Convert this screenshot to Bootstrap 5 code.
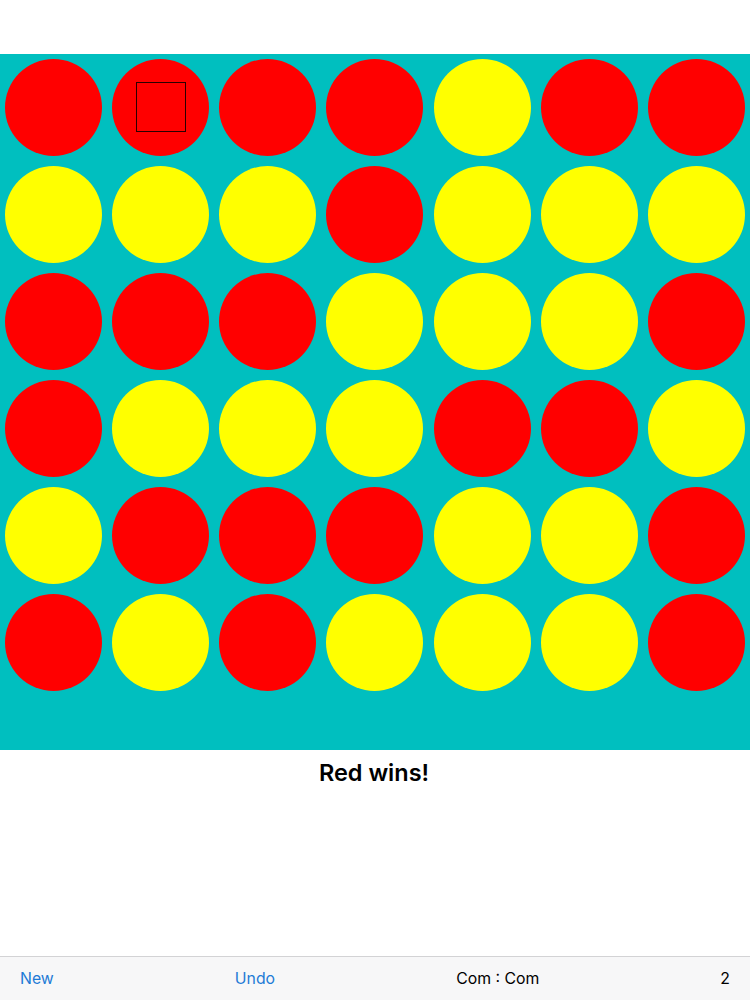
<!DOCTYPE html>
<html lang="en">
<head>
<meta charset="utf-8">
<title>Four in a row</title>
<link href="https://cdn.jsdelivr.net/npm/bootstrap@5.3.0/dist/css/bootstrap.min.css" rel="stylesheet">
<style>
html, body { height: 100%; }
body { font-family: "Inter", "Liberation Sans", sans-serif; background: #fff; color: #000; }
.app-shell { height: 1000px; padding-top: 54px; }
.game-board { height: 696px; padding: 5px; background: #00bfbf; display: grid; grid-template-columns: repeat(7, 97px); grid-auto-rows: 97px; justify-content: space-between; row-gap: 10px; }
.disc { position: relative; border-radius: 50%; }
.disc-r { background: #ff0000; }
.disc-y { background: #ffff00; }
.cursor-box { position: absolute; left: 24px; top: 23px; width: 50px; height: 50px; border: 1px solid #2a0000; }
.result-line { font-size: 23.5px; font-weight: 600; line-height: 28px; margin-top: 9px; padding-right: 2px; }
.tool-strip { height: 44px; background: #f7f7f8; border-top: 1px solid #d3d3d5; padding: 0 20px; font-size: 15.8px; }
.tool-link { color: #1e7bd6; text-decoration: none; }
</style>
</head>
<body>
<div class="app-shell d-flex flex-column">
  <div class="game-board">
    <div class="disc disc-r"></div><div class="disc disc-r"><div class="cursor-box"></div></div><div class="disc disc-r"></div><div class="disc disc-r"></div><div class="disc disc-y"></div><div class="disc disc-r"></div><div class="disc disc-r"></div>
    <div class="disc disc-y"></div><div class="disc disc-y"></div><div class="disc disc-y"></div><div class="disc disc-r"></div><div class="disc disc-y"></div><div class="disc disc-y"></div><div class="disc disc-y"></div>
    <div class="disc disc-r"></div><div class="disc disc-r"></div><div class="disc disc-r"></div><div class="disc disc-y"></div><div class="disc disc-y"></div><div class="disc disc-y"></div><div class="disc disc-r"></div>
    <div class="disc disc-r"></div><div class="disc disc-y"></div><div class="disc disc-y"></div><div class="disc disc-y"></div><div class="disc disc-r"></div><div class="disc disc-r"></div><div class="disc disc-y"></div>
    <div class="disc disc-y"></div><div class="disc disc-r"></div><div class="disc disc-r"></div><div class="disc disc-r"></div><div class="disc disc-y"></div><div class="disc disc-y"></div><div class="disc disc-r"></div>
    <div class="disc disc-r"></div><div class="disc disc-y"></div><div class="disc disc-r"></div><div class="disc disc-y"></div><div class="disc disc-y"></div><div class="disc disc-y"></div><div class="disc disc-r"></div>
  </div>
  <div class="result-line text-center">Red wins!</div>
  <div class="tool-strip d-flex justify-content-between align-items-center mt-auto">
    <a class="tool-link" href="#">New</a>
    <a class="tool-link" href="#">Undo</a>
    <span>Com : Com</span>
    <span>2</span>
  </div>
</div>
<script src="https://cdn.jsdelivr.net/npm/bootstrap@5.3.0/dist/js/bootstrap.bundle.min.js"></script>
</body>
</html>
